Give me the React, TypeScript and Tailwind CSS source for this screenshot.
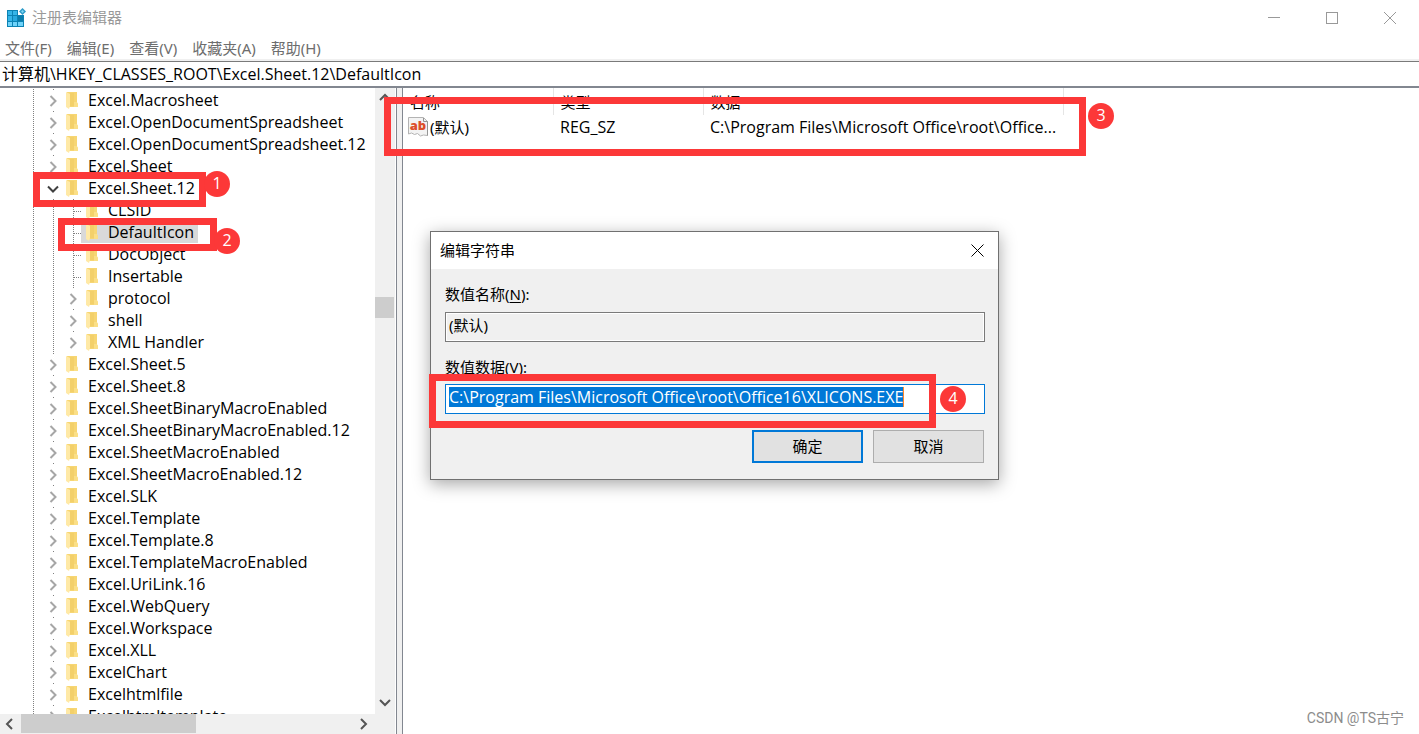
import { useEffect, useRef } from 'react';

type TreeItem = {
  name: string;
  child?: boolean;
  state?: 'open' | 'leaf';
  selected?: boolean;
};

const menuItems = ['文件(F)', '编辑(E)', '查看(V)', '收藏夹(A)', '帮助(H)'];

const treeItems: TreeItem[] = [
  { name: 'Excel.Macrosheet' },
  { name: 'Excel.OpenDocumentSpreadsheet' },
  { name: 'Excel.OpenDocumentSpreadsheet.12' },
  { name: 'Excel.Sheet' },
  { name: 'Excel.Sheet.12', state: 'open' },
  { name: 'CLSID', child: true, state: 'leaf' },
  { name: 'DefaultIcon', child: true, state: 'leaf', selected: true },
  { name: 'DocObject', child: true, state: 'leaf' },
  { name: 'Insertable', child: true, state: 'leaf' },
  { name: 'protocol', child: true },
  { name: 'shell', child: true },
  { name: 'XML Handler', child: true },
  { name: 'Excel.Sheet.5' },
  { name: 'Excel.Sheet.8' },
  { name: 'Excel.SheetBinaryMacroEnabled' },
  { name: 'Excel.SheetBinaryMacroEnabled.12' },
  { name: 'Excel.SheetMacroEnabled' },
  { name: 'Excel.SheetMacroEnabled.12' },
  { name: 'Excel.SLK' },
  { name: 'Excel.Template' },
  { name: 'Excel.Template.8' },
  { name: 'Excel.TemplateMacroEnabled' },
  { name: 'Excel.UriLink.16' },
  { name: 'Excel.WebQuery' },
  { name: 'Excel.Workspace' },
  { name: 'Excel.XLL' },
  { name: 'ExcelChart' },
  { name: 'Excelhtmlfile' },
  { name: 'Excelhtmltemplate' },
];

const RegeditIcon = () => (
  <svg width="20" height="20" viewBox="0 0 20 20" className="shrink-0">
    <path d="M0 2h11v5h6v12H0z" fill="#0c83b4" />
    <path d="M1 3h4v4H1zM6 3h4v4H6zM1 8h4v5H1z" fill="#35b5e8" />
    <path d="M1 14h4v4H1zM6 14h4v4H6zM11 14h5v4h-5z" fill="#6fd3fa" />
    <path d="M6 8h4v5H6z" fill="#27a9de" />
    <path d="M11 8h5v5h-5z" fill="#0a7cab" />
    <path d="M15.500 0l3.500 3.500-3.500 3.500-3.500-3.500z" fill="#2f9cc9" />
    <path d="M15.500 2l1.500 1.500-1.500 1.500-1.500-1.500z" fill="#7fd6f5" />
  </svg>
);

const FolderIcon = () => (
  <svg width="12" height="17" viewBox="0 0 12 17" className="shrink-0">
    <path d="M1 0h10v11l1 1v3H1z" fill="#f7d673" />
    <path d="M4 1h4v13H4z" fill="#f3d06a" />
    <path d="M8 10h3l1 2v3H8z" fill="#fbdf86" />
    <path d="M0 0l4 2v12l-1 3-3-2z" fill="#ffe9a6" />
  </svg>
);

const StringIcon = () => (
  <svg width="20" height="20" viewBox="0 0 20 20" className="shrink-0">
    <path
      d="M.5.5V17l3-1 3 1.500 3-1 3 2.500 3-1 4 .5V4.500l-4-4z"
      fill="#f3f3f3"
      stroke="#b3b3b3"
    />
    <path d="M15.500 1v3.500h4M19.500 4.500V18.500" fill="none" stroke="#949494" />
    <text x="10" y="13" textAnchor="middle" fontSize="13" fontWeight="800" fontFamily="Open Sans, sans-serif" fill="#dc4f2a">
      ab
    </text>
  </svg>
);

const Connector = ({ state }: { state?: 'open' | 'leaf' }) => {
  if (state === 'leaf') {
    return (
      <svg width="15" height="22" className="shrink-0" stroke="#808080" strokeDasharray="1 1">
        <path d="M7.500 0v22M8 12.500h7" />
      </svg>
    );
  }
  return (
    <button type="button" aria-label={state === 'open' ? '折叠' : '展开'} className="shrink-0">
      <svg width="15" height="22" fill="none">
        <path d="M7.500 0v1" stroke="#808080" />
        {state === 'open' ? (
          <path d="M2 9.500l5 5 5-5" stroke="#404040" strokeWidth="2" />
        ) : (
          <path d="M4.500 7l5 5-5 5" stroke="#a6a6a6" strokeWidth="2" />
        )}
      </svg>
    </button>
  );
};

const Guide = () => (
  <span className="w-px shrink-0 self-stretch bg-[repeating-linear-gradient(to_bottom,#808080_0px_1px,transparent_1px_2px)]" />
);

const TreeRow = ({ item }: { item: TreeItem }) => (
  <li
    role="treeitem"
    aria-selected={!!item.selected}
    className="flex h-[22px] items-center pl-[33px]"
  >
    <Guide />
    {item.child && (
      <span className="flex self-stretch pl-[19px]">
        <Guide />
      </span>
    )}
    <span className="w-3 shrink-0" />
    <Connector state={item.state} />
    <span className={`flex h-[22px] items-center gap-[10px] pr-1 pl-[5px] ${item.selected ? 'bg-[#d9d9d9]' : ''}`}>
      <FolderIcon />
      <span className="whitespace-nowrap">{item.name}</span>
    </span>
  </li>
);

const arrows = {
  up: 'M5 12l5-5 5 5',
  down: 'M5 6l5 5 5-5',
  left: 'M12 5l-5 5 5 5',
  right: 'M8 5l5 5-5 5',
};

const ScrollArrow = ({ dir, label }: { dir: keyof typeof arrows; label: string }) => (
  <button type="button" aria-label={label} className="h-5 w-5 shrink-0">
    <svg width="20" height="20" fill="none" stroke="#555" strokeWidth="2">
      <path d={arrows[dir]} />
    </svg>
  </button>
);

const TitleBar = () => (
  <header className="flex h-[35px] shrink-0 items-center pl-[7px]">
    <RegeditIcon />
    <h1 className="flex-1 pb-[2px] pl-[5px] text-[#999]">注册表编辑器</h1>
    <button type="button" aria-label="最小化" className="flex h-8 w-[58px] items-center justify-center">
      <span className="h-px w-3 bg-[#999]" />
    </button>
    <button type="button" aria-label="最大化" className="flex h-8 w-[58px] items-center justify-center">
      <span className="h-3 w-3 border border-[#999]" />
    </button>
    <button type="button" aria-label="关闭" className="flex h-8 w-[58px] items-center justify-center">
      <svg width="12" height="12" stroke="#999">
        <path d="M0 0l12 12M12 0L0 12" />
      </svg>
    </button>
  </header>
);

const KeyTree = () => (
  <aside className="flex w-[396px] shrink-0 flex-col pr-px">
    <div className="flex min-h-0 flex-1">
      <ul
        role="tree"
        aria-label="注册表项"
        className="min-w-0 flex-1 overflow-hidden pt-px font-['Open_Sans','Noto_Sans_CJK_SC',sans-serif] text-base leading-5"
      >
        {treeItems.map((item) => (
          <TreeRow key={item.name} item={item} />
        ))}
      </ul>
      <div className="flex w-5 flex-col bg-[#f0f0f0]">
        <ScrollArrow dir="up" label="向上滚动" />
        <div className="flex-1 pt-[189px]">
          <div className="h-[21px] w-[19px] bg-[#cdcdcd]" />
        </div>
        <ScrollArrow dir="down" label="向下滚动" />
      </div>
    </div>
    <div className="flex h-5 shrink-0 bg-[#f0f0f0] pr-[22px]">
      <ScrollArrow dir="left" label="向左滚动" />
      <div className="flex-1 pl-px">
        <div className="h-[19px] w-[175px] bg-[#cdcdcd]" />
      </div>
      <ScrollArrow dir="right" label="向右滚动" />
    </div>
  </aside>
);

const ValueList = () => (
  <section className="min-w-0 flex-1">
    <table className="w-[661px] table-fixed border-collapse text-left">
      <thead>
        <tr className="h-[27px]">
          <th scope="col" className="w-[150px] border-r border-[#e5e5e5] pl-[7px] font-normal">名称</th>
          <th scope="col" className="w-[150px] border-r border-[#e5e5e5] pl-[7px] font-normal">类型</th>
          <th scope="col" className="border-r border-[#e5e5e5] pl-[7px] font-normal">数据</th>
        </tr>
      </thead>
      <tbody>
        <tr className="h-6">
          <td className="pl-[5px]">
            <span className="flex items-center gap-[2px]">
              <StringIcon />
              (默认)
            </span>
          </td>
          <td className="pl-[7px] font-['Open_Sans',sans-serif] text-base leading-5">REG_SZ</td>
          <td className="pl-[7px] font-['Open_Sans',sans-serif] text-base leading-5 whitespace-nowrap">
            C:\Program Files\Microsoft Office\root\Office...
          </td>
        </tr>
      </tbody>
    </table>
  </section>
);

const EditStringDialog = () => {
  const dataRef = useRef<HTMLInputElement>(null);

  useEffect(() => {
    dataRef.current?.focus();
    dataRef.current?.select();
  }, []);

  return (
    <div
      role="dialog"
      aria-label="编辑字符串"
      className="absolute top-[231px] left-[430px] w-[569px] border border-[#707070] bg-[#f0f0f0] shadow-[0_4px_16px_rgba(0,0,0,0.35)]"
    >
      <div className="flex h-[37px] items-center justify-between bg-white pr-[14px] pb-px pl-[9px]">
        <h2>编辑字符串</h2>
        <button type="button" aria-label="关闭">
          <svg width="13" height="13" stroke="#000">
            <path d="M0.500 0.500l12 12M12.500 0.500l-12 12" />
          </svg>
        </button>
      </div>
      <form className="flex flex-col px-[14px] pt-[15px] pb-4" onSubmit={(e) => e.preventDefault()}>
        <label htmlFor="value-name" className="leading-5">
          数值名称(<u className="underline-offset-2">N</u>):
        </label>
        <div className="mt-2 mr-[-1px] flex h-[30px] items-start border border-[#7a7a7a] px-[3px] pt-[2px] inset-ring inset-ring-white">
          <input id="value-name" readOnly value="(默认)" className="h-5 w-full leading-5 outline-none" />
        </div>
        <label htmlFor="value-data" className="mt-[15px] leading-5">
          数值数据(V):
        </label>
        <div className="mt-[7px] mr-[-1px] flex h-[30px] items-start border border-[#0078d7] bg-white px-[3px] pt-[2px]">
          <input
            id="value-data"
            ref={dataRef}
            defaultValue="C:\Program Files\Microsoft Office\root\Office16\XLICONS.EXE"
            className="field-sizing-content h-5 font-['Open_Sans',sans-serif] text-base leading-5 outline-none selection:bg-[#0078d7] selection:text-white"
          />
          <span className="h-5 w-px bg-[#ff8728]" />
        </div>
        <div className="mt-4 flex justify-end gap-[10px]">
          <button type="submit" className="h-[33px] w-[111px] border-2 border-[#0078d7] bg-[#e1e1e1] pb-[2px]">
            确定
          </button>
          <button type="button" className="h-[33px] w-[111px] border border-[#adadad] bg-[#e1e1e1] pb-[2px]">
            取消
          </button>
        </div>
      </form>
    </div>
  );
};

// Red step markers laid over the window
const Callouts = () => (
  <div className="pointer-events-none text-center font-['Open_Sans',sans-serif] text-base leading-6 text-white">
    <div className="absolute top-[172px] left-[33px] h-[35px] w-[173px] border-7 border-[#fc3838]" />
    <span className="absolute top-[171px] left-[204px] h-[26px] w-[26px] rounded-full bg-[#fc3838]">1</span>
    <div className="absolute top-[218px] left-[58px] h-[33px] w-[159px] border-7 border-[#fc3838]" />
    <span className="absolute top-[228px] left-[214px] h-[26px] w-[26px] rounded-full bg-[#fc3838]">2</span>
    <div className="absolute top-[97px] left-[384px] h-[59px] w-[702px] border-7 border-[#fc3838]" />
    <span className="absolute top-[103px] left-[1088px] h-[26px] w-[26px] rounded-full bg-[#fc3838]">3</span>
    <div className="absolute top-[374px] left-[429px] h-[54px] w-[507px] border-7 border-[#fc3838]" />
    <span className="absolute top-[386px] left-[940px] h-[26px] w-[26px] rounded-full bg-[#fc3838]">4</span>
  </div>
);

const App = () => {
  return (
    <div className="relative flex h-screen flex-col overflow-hidden bg-white font-['Noto_Sans','Noto_Sans_CJK_SC',sans-serif] text-[15px] leading-5 text-black">
      <TitleBar />
      <nav className="flex h-[26px] shrink-0 items-center gap-[15px] border-b-2 border-[#f0f0f0] pt-[2px] pl-[5px] text-[#6d6d6d]">
        {menuItems.map((item) => (
          <button key={item} type="button">
            {item}
          </button>
        ))}
      </nav>
      <div className="flex h-[27px] shrink-0 items-center border-t border-b-2 border-t-[#7a7a7a] border-b-[#828790]">
        <input
          aria-label="地址"
          defaultValue="计算机\HKEY_CLASSES_ROOT\Excel.Sheet.12\DefaultIcon"
          className="w-full pl-[2px] font-['Open_Sans','Noto_Sans_CJK_SC',sans-serif] text-base leading-5 outline-none"
        />
      </div>
      <main className="flex min-h-0 flex-1">
        <KeyTree />
        <div className="w-[7px] shrink-0 border-x border-[#828790] bg-[#f0f0f0]" />
        <ValueList />
      </main>
      <EditStringDialog />
      <Callouts />
      <footer className="absolute right-[15px] bottom-[6px] font-['Roboto','Noto_Sans_CJK_SC',sans-serif] text-sm text-[#8c8c8c]">
        CSDN @TS古宁
      </footer>
    </div>
  );
};

export default App;
